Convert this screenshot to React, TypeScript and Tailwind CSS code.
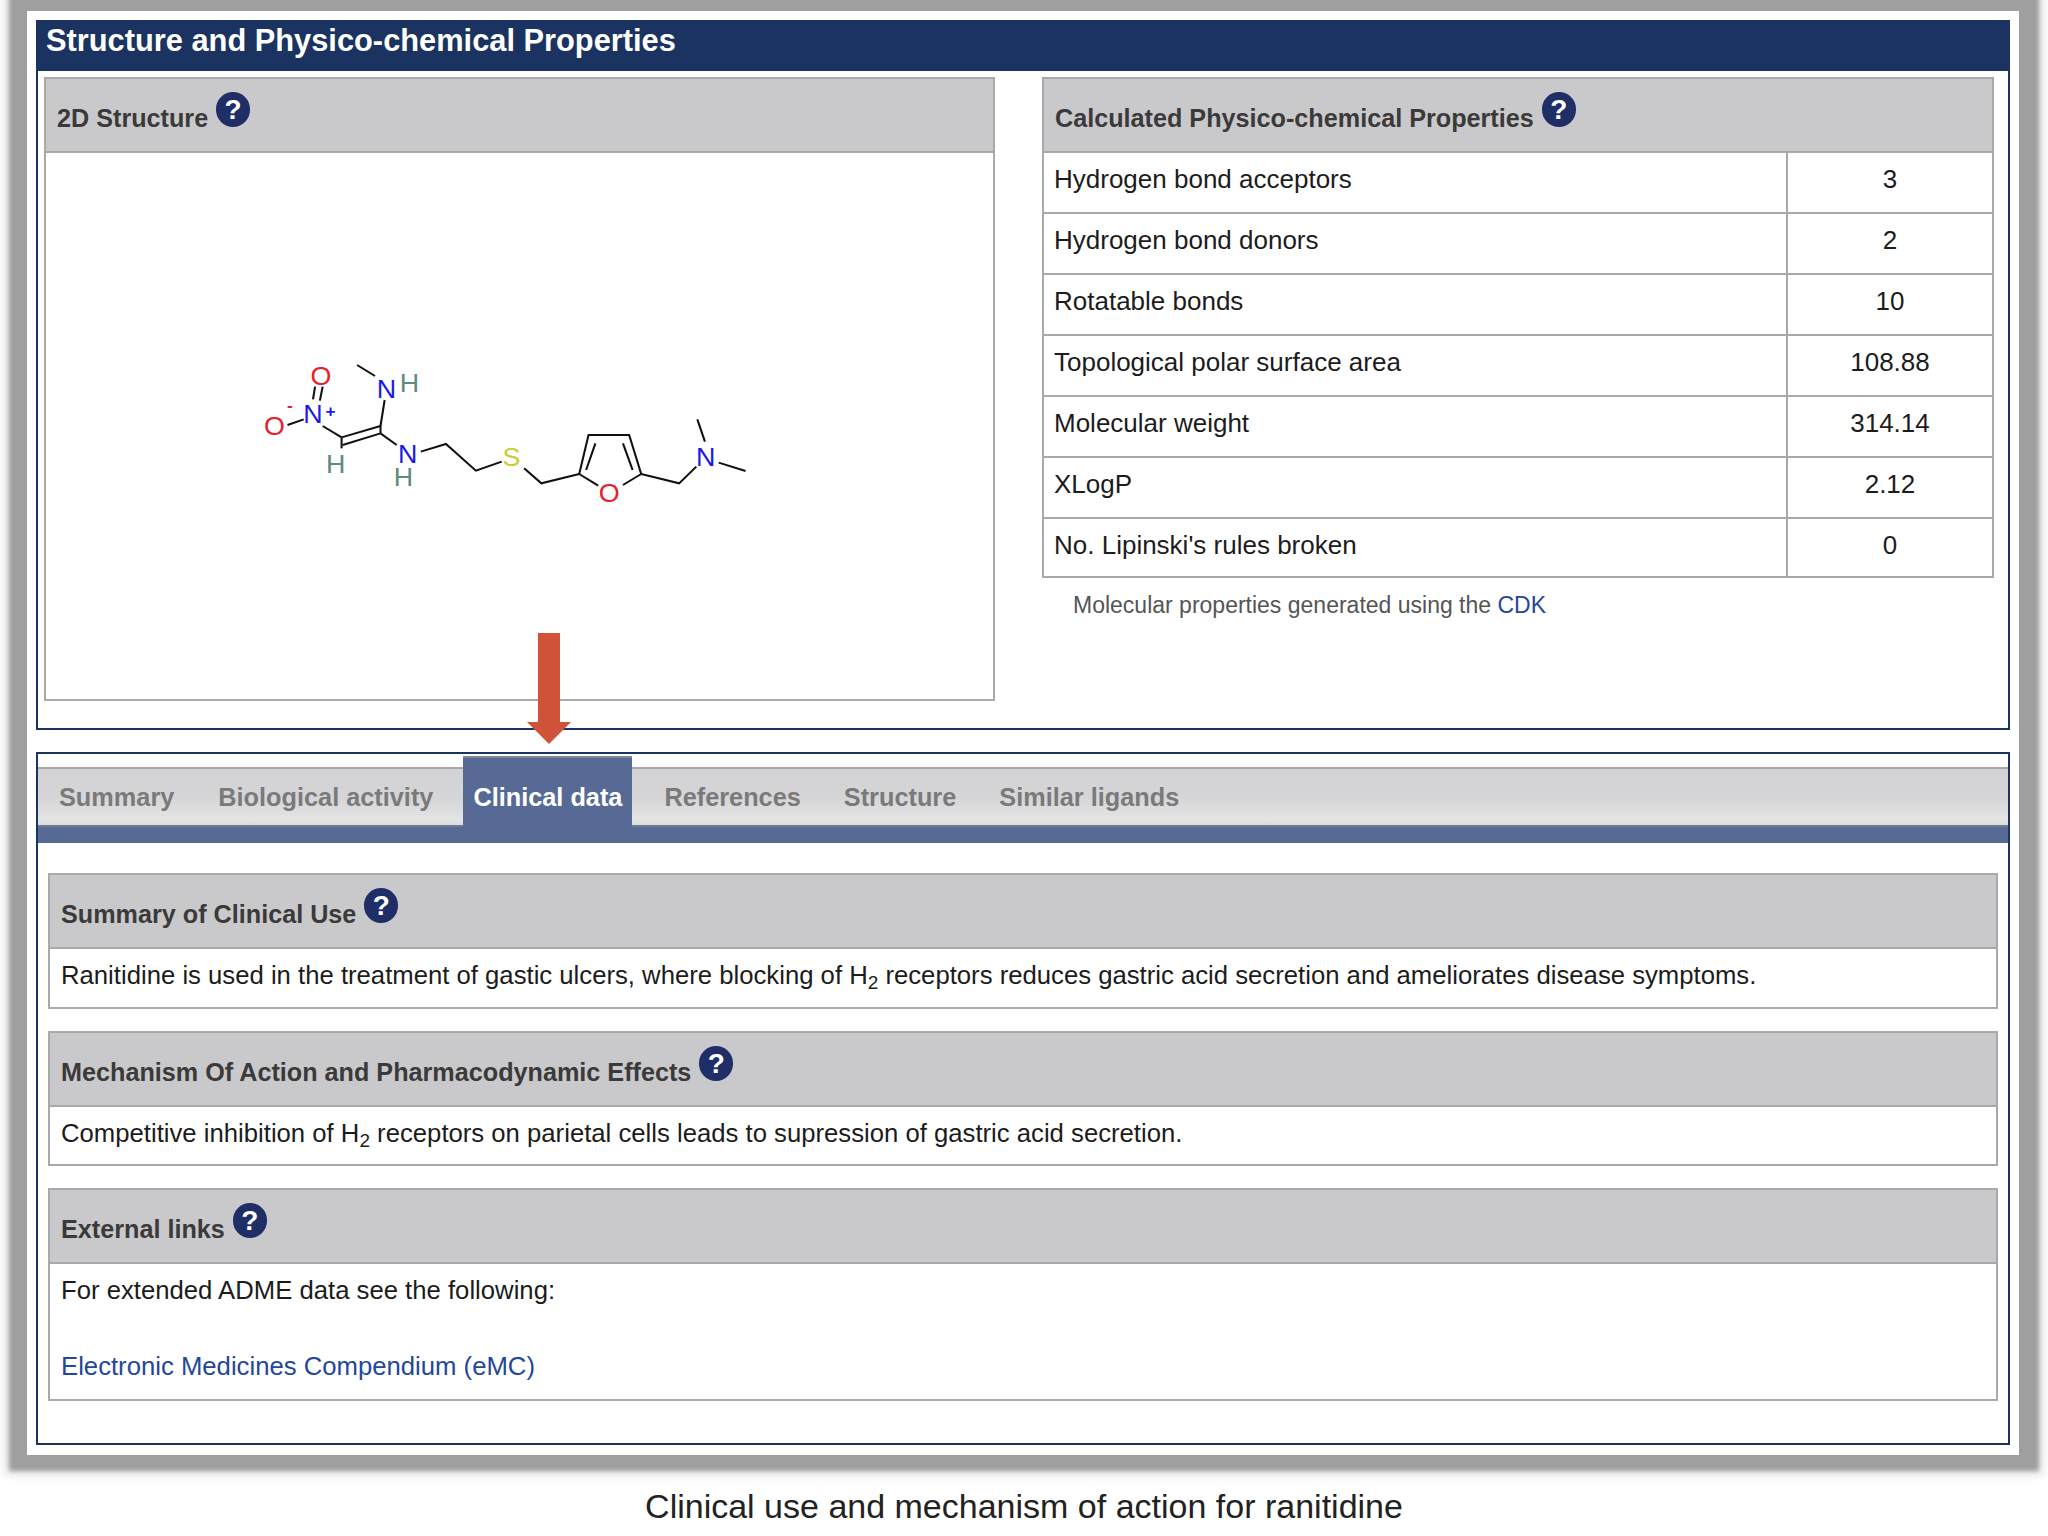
import React from "react";

const font = { fontFamily: '"Liberation Sans", Arial, sans-serif' };

function Help() {
  return (
    <span className="relative top-[-6px] ml-[8px] inline-flex h-[35px] w-[34px] items-center justify-center rounded-full bg-[#1f2e66] text-[28px] font-bold leading-none text-white align-middle">
      ?
    </span>
  );
}

function PanelHead({ children }: { children: React.ReactNode }) {
  return (
    <div className="flex h-[74px] items-end border-b-2 border-[#a9a9ab] bg-[#c9c9cb] pb-[18px] pl-[11px] text-[25.2px] font-bold leading-[30px] text-[#3a3a3a]">
      <span>{children}</span>
      <Help />
    </div>
  );
}

function Molecule() {
  const lines = [
    "M340 75L392 108",
    "M420 180L408 258",
    "M408 258L295 292",
    "M408 280L298 315",
    "M295 292L295 325",
    "M408 258L408 280",
    "M408 280L455 315",
    "M525 335L598 312L685 392L760 365",
    "M825 385L875 430L985 402",
    "M985 402L1012 285L1130 285L1165 402",
    "M1005 390L1032 310",
    "M1112 310L1140 390",
    "M985 402L1040 437",
    "M1112 435L1165 402",
    "M1165 402L1275 430L1325 380",
    "M1328 238L1350 305",
    "M1390 368L1468 393",
    "M212 178L218 140",
    "M232 182L240 140",
    "M138 255L185 238",
    "M240 258L295 292",
  ];
  const labels: [string, number, number, string][] = [
    ["N", 425, 148, "#1a1ae6"],
    ["H", 492, 130, "#5f8a80"],
    ["N", 487, 342, "#1a1ae6"],
    ["H", 475, 412, "#5f8a80"],
    ["S", 788, 350, "#cccc33"],
    ["O", 1072, 460, "#e8202a"],
    ["N", 1352, 350, "#1a1ae6"],
    ["N", 212, 222, "#1a1ae6"],
    ["O", 235, 108, "#e8202a"],
    ["O", 100, 258, "#e8202a"],
    ["H", 278, 372, "#5f8a80"],
  ];
  return (
    <svg width="540" height="200" viewBox="0 0 1568 600" preserveAspectRatio="none" className="ml-[194px] mt-[187px] block">
      {lines.map((d) => (
        <path key={d} d={d} fill="none" stroke="#111" strokeWidth="6" />
      ))}
      {labels.map(([t, x, y, c], i) => (
        <text key={i} x={x} y={y} fill={c} fontSize="78" textAnchor="middle" dominantBaseline="central" style={font}>
          {t}
        </text>
      ))}
      <text x="263" y="215" fill="#1a1ae6" fontSize="50" fontWeight="bold" textAnchor="middle" dominantBaseline="central" style={font}>+</text>
      <text x="145" y="198" fill="#e8202a" fontSize="50" fontWeight="bold" textAnchor="middle" dominantBaseline="central" style={font}>-</text>
    </svg>
  );
}

const rows: [string, string][] = [
  ["Hydrogen bond acceptors", "3"],
  ["Hydrogen bond donors", "2"],
  ["Rotatable bonds", "10"],
  ["Topological polar surface area", "108.88"],
  ["Molecular weight", "314.14"],
  ["XLogP", "2.12"],
  ["No. Lipinski's rules broken", "0"],
];

function Section({ title, children, className }: { title: string; children: React.ReactNode; className: string }) {
  return (
    <div className={"border-2 border-[#a9a9ab] " + className}>
      <PanelHead>{title}</PanelHead>
      <div className="pl-[11px] text-[25.7px] leading-[30px] text-[#1c1c1c]">{children}</div>
    </div>
  );
}

export default function App() {
  return (
    <div className="relative h-[1536px] w-[2048px] overflow-hidden bg-white" style={font}>
      <div className="absolute left-[9px] top-[-10px] h-[1481px] w-[2030px] bg-[#9f9f9f] blur-[2px] shadow-[0_0_8px_4px_#e2e2e2]" />
      <div className="relative ml-[27px] w-[1992px] pt-[11px]">
        <div className="h-[1444px] bg-white px-[9px] pt-[9px]">
          <div className="h-[710px] border-2 border-[#1b3360]">
            <div className="flex h-[49px] items-center bg-[#1b3360] pb-[11px] pl-[8px] text-[30.8px] font-bold leading-none text-white">
              Structure and Physico-chemical Properties
            </div>
            <div className="flex pl-[6px] pt-[6px]">
              <div className="h-[624px] w-[951px] border-2 border-[#a9a9ab]">
                <PanelHead>2D Structure</PanelHead>
                <Molecule />
              </div>
              <div className="ml-[47px] w-[952px]">
                <div className="border-2 border-[#a9a9ab]">
                  <PanelHead>Calculated Physico-chemical Properties</PanelHead>
                  {rows.map(([k, v], i) => (
                    <div key={k} className={"flex text-[26px] leading-[30px] text-[#1c1c1c] " + (i < rows.length - 1 ? "h-[61px] border-b-2 border-[#a9a9ab]" : "h-[57px]")}>
                      <div className="w-[744px] border-r-2 border-[#a9a9ab] pl-[10px] pt-[11px]">{k}</div>
                      <div className="flex-1 pt-[11px] text-center">{v}</div>
                    </div>
                  ))}
                </div>
                <div className="pl-[31px] pt-[13px] text-[23px] leading-[28px] text-[#555]">
                  Molecular properties generated using the <span className="text-[#24479c]">CDK</span>
                </div>
              </div>
            </div>
          </div>

          <div className="mt-[22px] h-[693px] border-2 border-[#1b3360]">
            <div className="relative mt-[13px] h-[76px] border-t-2 border-[#a8a8a8] bg-[linear-gradient(#d2d2d4_0,#d6d6d8_40%,#e4e4e5_68%,#dcdcde_76%)]">
              <div className="absolute bottom-0 left-0 right-0 h-[18px] border-t-2 border-[#6f7a92] bg-[#566a95]" />
              <div className="absolute left-[10px] top-[-13px] flex text-[25.3px] font-bold leading-[30px] text-[#7a7a7a]">
                <div className="mr-[22px] px-[11px] pt-[26px]">Summary</div>
                <div className="mr-[19px] px-[11px] pt-[26px]">Biological activity</div>
                <div className="mr-[21px] h-[87px] border-t-2 border-[#7f8799] bg-[#566a95] px-[10px] pt-[24px] text-white">Clinical data</div>
                <div className="mr-[21px] px-[11px] pt-[26px]">References</div>
                <div className="mr-[21px] px-[11px] pt-[26px]">Structure</div>
                <div className="mr-[21px] px-[11px] pt-[26px]">Similar ligands</div>
              </div>
            </div>
            <div className="px-[10px] pt-[30px]">
              <Section title="Summary of Clinical Use" className="h-[136px]">
                <div className="pt-[11px]">
                  Ranitidine is used in the treatment of gastic ulcers, where blocking of H<sub className="text-[19px]">2</sub> receptors reduces gastric acid secretion and ameliorates disease symptoms.
                </div>
              </Section>
              <Section title="Mechanism Of Action and Pharmacodynamic Effects" className="mt-[22px] h-[135px]">
                <div className="pt-[11px]">
                  Competitive inhibition of H<sub className="text-[19px]">2</sub> receptors on parietal cells leads to supression of gastric acid secretion.
                </div>
              </Section>
              <Section title="External links" className="mt-[22px] h-[213px]">
                <div className="pt-[11px]">For extended ADME data see the following:</div>
                <div className="pt-[46px] text-[#24479c]">Electronic Medicines Compendium (eMC)</div>
              </Section>
            </div>
          </div>
        </div>
      </div>
      <svg className="absolute left-[527px] top-[633px]" width="44" height="111" viewBox="0 0 44 111">
        <path d="M11 0H33V89H44L22 111L0 89H11Z" fill="#cf5239" />
      </svg>
      <div className="absolute left-0 top-[1486px] w-[2048px] text-center text-[34px] leading-[40px] text-[#222]">
        Clinical use and mechanism of action for ranitidine
      </div>
    </div>
  );
}
